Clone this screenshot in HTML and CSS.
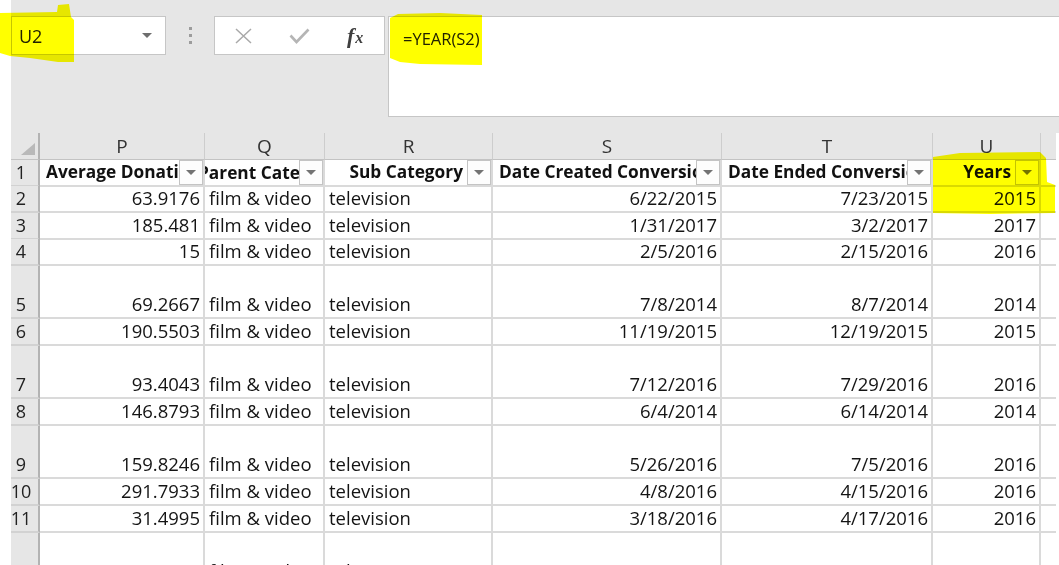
FILE: index.html
```html
<!DOCTYPE html>
<html>
<head>
<meta charset="utf-8">
<link rel="stylesheet" href="styles.css">
</head>
<body>
<div class="app">
  <div class="toolbar">
    <div class="namebox"><span class="ref">U2</span><span class="nb-arrow"></span></div>
    <div class="grip"><i></i><i></i><i></i></div>
    <div class="fbtns">
      <svg class="ic-x" width="17" height="16" viewBox="0 0 17 16"><path d="M1 1 L16 15 M16 1 L1 15" stroke="#a9a9a9" stroke-width="1.5" fill="none"/></svg>
      <svg class="ic-check" width="21" height="16" viewBox="0 0 21 16"><path d="M1.5 7.5 L7.5 14 L19.5 1.5" stroke="#b5b5b5" stroke-width="2.6" fill="none"/></svg>
      <span class="fx"><span class="fx-f">f</span><span class="fx-x">x</span></span>
    </div>
    <div class="formula">=YEAR(S2)</div>
  </div>

  <div class="sheet">
    <div class="row colhead">
      <div class="h corner"><svg width="14" height="12" viewBox="0 0 14 12"><polygon points="14,0 14,12 0,12" fill="#b9b9b9"/></svg></div>
      <div class="h">P</div>
      <div class="h">Q</div>
      <div class="h">R</div>
      <div class="h">S</div>
      <div class="h">T</div>
      <div class="h">U</div>
      <div class="h last"></div>
    </div>

    <div class="row r1">
      <div class="c rh">1</div>
      <div class="c hdr"><span class="t">Average Donation</span><span class="fbtn"></span></div>
      <div class="c hdr ctr"><span class="t">Parent Category</span><span class="fbtn"></span></div>
      <div class="c hdr rgt"><span class="t">Sub Category</span><span class="fbtn"></span></div>
      <div class="c hdr"><span class="t">Date Created Conversion</span><span class="fbtn"></span></div>
      <div class="c hdr"><span class="t">Date Ended Conversion</span><span class="fbtn"></span></div>
      <div class="c hdr rgt"><span class="t">Years</span><span class="fbtn"></span></div>
      <div class="c last"></div>
    </div>

    <div class="row">
      <div class="c rh">2</div><div class="c num">63.9176</div><div class="c">film &amp; video</div><div class="c">television</div><div class="c num">6/22/2015</div><div class="c num">7/23/2015</div><div class="c num">2015</div><div class="c last"></div>
    </div>
    <div class="row">
      <div class="c rh">3</div><div class="c num">185.481</div><div class="c">film &amp; video</div><div class="c">television</div><div class="c num">1/31/2017</div><div class="c num">3/2/2017</div><div class="c num">2017</div><div class="c last"></div>
    </div>
    <div class="row">
      <div class="c rh">4</div><div class="c num">15</div><div class="c">film &amp; video</div><div class="c">television</div><div class="c num">2/5/2016</div><div class="c num">2/15/2016</div><div class="c num">2016</div><div class="c last"></div>
    </div>
    <div class="row tall">
      <div class="c rh">5</div><div class="c num">69.2667</div><div class="c">film &amp; video</div><div class="c">television</div><div class="c num">7/8/2014</div><div class="c num">8/7/2014</div><div class="c num">2014</div><div class="c last"></div>
    </div>
    <div class="row">
      <div class="c rh">6</div><div class="c num">190.5503</div><div class="c">film &amp; video</div><div class="c">television</div><div class="c num">11/19/2015</div><div class="c num">12/19/2015</div><div class="c num">2015</div><div class="c last"></div>
    </div>
    <div class="row tall">
      <div class="c rh">7</div><div class="c num">93.4043</div><div class="c">film &amp; video</div><div class="c">television</div><div class="c num">7/12/2016</div><div class="c num">7/29/2016</div><div class="c num">2016</div><div class="c last"></div>
    </div>
    <div class="row">
      <div class="c rh">8</div><div class="c num">146.8793</div><div class="c">film &amp; video</div><div class="c">television</div><div class="c num">6/4/2014</div><div class="c num">6/14/2014</div><div class="c num">2014</div><div class="c last"></div>
    </div>
    <div class="row tall">
      <div class="c rh">9</div><div class="c num">159.8246</div><div class="c">film &amp; video</div><div class="c">television</div><div class="c num">5/26/2016</div><div class="c num">7/5/2016</div><div class="c num">2016</div><div class="c last"></div>
    </div>
    <div class="row">
      <div class="c rh">10</div><div class="c num">291.7933</div><div class="c">film &amp; video</div><div class="c">television</div><div class="c num">4/8/2016</div><div class="c num">4/15/2016</div><div class="c num">2016</div><div class="c last"></div>
    </div>
    <div class="row">
      <div class="c rh">11</div><div class="c num">31.4995</div><div class="c">film &amp; video</div><div class="c">television</div><div class="c num">3/18/2016</div><div class="c num">4/17/2016</div><div class="c num">2016</div><div class="c last"></div>
    </div>
    <div class="row tall">
      <div class="c rh">12</div><div class="c num">52.3333</div><div class="c">film &amp; video</div><div class="c">television</div><div class="c num">6/10/2016</div><div class="c num">7/10/2016</div><div class="c num">2016</div><div class="c last"></div>
    </div>
  </div>
</div>

<div class="hl hl-name"></div>
<div class="hl hl-formula"></div>
<div class="hl hl-years"></div>
</body>
</html>
```

FILE: styles.css
```css
html, body {
  margin: 0;
  padding: 0;
}
body {
  background: #ffffff;
  font-family: "Open Sans", "Liberation Sans", sans-serif;
  width: 1059px;
  height: 565px;
  overflow: hidden;
  position: relative;
}
.app {
  margin-left: 11px;
}

/* ---------- toolbar ---------- */
.toolbar {
  height: 133px;
  box-sizing: border-box;
  padding-top: 16px;
  background: #e6e6e6;
  display: flex;
  align-items: flex-start;
}
.namebox {
  width: 155px;
  height: 39px;
  box-sizing: border-box;
  border: 1px solid #c6c6c6;
  background: #fff;
  display: flex;
  align-items: center;
  padding-left: 7px;
  font-size: 18px;
  color: #222;
}
.nb-arrow {
  margin-left: auto;
  margin-right: 13px;
  width: 0;
  height: 0;
  border-left: 5px solid transparent;
  border-right: 5px solid transparent;
  border-top: 5px solid #6e6e6e;
}
.grip {
  width: 48px;
  height: 39px;
  display: flex;
  flex-direction: column;
  align-items: center;
  justify-content: center;
  gap: 4px;
}
.grip i {
  display: block;
  width: 3px;
  height: 3px;
  background: #9c9c9c;
}
.fbtns {
  width: 171px;
  height: 39px;
  box-sizing: border-box;
  border: 1px solid #c6c6c6;
  background: #fff;
  display: flex;
  align-items: center;
  padding-left: 20px;
}
.ic-x { display: block; }
.ic-check { display: block; margin-left: 37px; }
.fx {
  margin-left: 37px;
  font-family: "Liberation Serif", "DejaVu Serif", serif;
  font-style: italic;
  font-weight: 700;
  color: #3f3f3f;
  display: flex;
  align-items: baseline;
}
.fx-f { font-size: 22px; line-height: 22px; }
.fx-x { font-size: 16px; line-height: 16px; margin-left: 1px; }
.formula {
  margin-left: 3px;
  flex: 1;
  height: 101px;
  box-sizing: border-box;
  border: 1px solid #c6c6c6;
  border-right: none;
  background: #fff;
  padding: 10px 14px;
  font-size: 16.5px;
  line-height: 24px;
  color: #222;
}

/* ---------- sheet ---------- */
.sheet {
  display: flex;
  flex-direction: column;
}
.row {
  display: grid;
  grid-template-columns: 29px 165px 120px 168px 229px 211px 108px 15px;
  height: 26.667px;
  flex: none;
}
.row.tall { height: 53.333px; }
.row.colhead { height: 27px; }
.row.r1 { height: 26px; }

.h {
  background: #e6e6e6;
  border-right: 1px solid #cdcdcd;
  border-bottom: 1px solid #c3c3c3;
  box-sizing: border-box;
  display: flex;
  align-items: center;
  justify-content: center;
  font-size: 19px;
  color: #333;
}
.h.corner {
  align-items: flex-start;
  justify-content: flex-start;
  padding: 10px 0 0 10px;
  border-right: 2px solid #b3b3b3;
}
.h.last { border-right: none; }

.c {
  box-sizing: border-box;
  border-right: 2px solid #dadada;
  border-bottom: 2px solid #dadada;
  display: flex;
  align-items: flex-end;
  padding: 0 3px 1px 4px;
  font-size: 18.5px;
  line-height: 24px;
  color: #141414;
  white-space: nowrap;
  overflow: hidden;
}
.c.num { justify-content: flex-end; }
.c.last { border-right: none; }
.c.rh {
  background: #e6e6e6;
  border-right: 2px solid #b3b3b3;
  border-bottom: 2px solid #d2d2d2;
  justify-content: center;
  padding: 0 7px 1px 0;
  font-size: 18px;
  color: #222;
  overflow: visible;
}

.hdr {
  position: relative;
  font-weight: 700;
  font-size: 17.3px;
  color: #111;
  align-items: center;
  padding-left: 6px;
}
.hdr .t { flex: none; }
.hdr.ctr { justify-content: center; padding: 0 2px 0 10px; }
.hdr.rgt { justify-content: flex-end; padding-right: 28px; }
.fbtn {
  position: absolute;
  right: 0;
  top: 0;
  bottom: 0;
  width: 24px;
  box-sizing: border-box;
  background: #fdfdfd;
  border: 1px solid #c4c4c4;
  display: flex;
  align-items: center;
  justify-content: center;
}
.fbtn::after {
  content: "";
  width: 0;
  height: 0;
  border-left: 5px solid transparent;
  border-right: 5px solid transparent;
  border-top: 5px solid #737373;
}

/* ---------- marker highlights ---------- */
.hl {
  position: absolute;
  background: #ffff00;
  mix-blend-mode: multiply;
  pointer-events: none;
}
.hl-name {
  left: 0;
  top: 0;
  width: 76px;
  height: 64px;
  clip-path: polygon(0px 13px, 57px 12px, 58px 5px, 69px 4px, 71px 17px, 74px 20px, 74px 62px, 58px 62px, 30px 58px, 10px 56px, 0px 53px);
}
.hl-formula {
  left: 388px;
  top: 10px;
  width: 96px;
  height: 58px;
  clip-path: polygon(2px 8px, 10px 4px, 52px 3px, 94px 5px, 94px 55px, 32px 54px, 12px 52px, 2px 48px);
}
.hl-years {
  left: 930px;
  top: 150px;
  width: 127px;
  height: 66px;
  clip-path: polygon(3px 7px, 30px 3px, 110px 2px, 116px 8px, 117px 32px, 125px 35px, 125px 63px, 60px 64px, 3px 63px);
}
```
